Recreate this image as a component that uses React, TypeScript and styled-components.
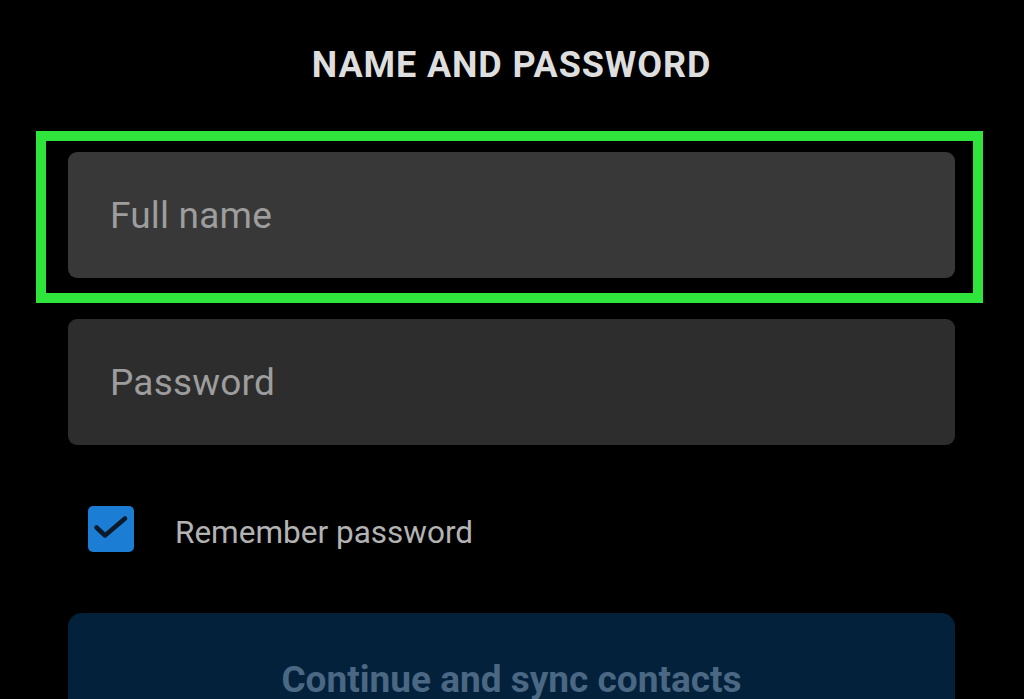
import React from "react";
import styled, { createGlobalStyle } from "styled-components";

const Global = createGlobalStyle`
  html, body {
    margin: 0;
    padding: 0;
    background: #000;
  }
  body {
    font-family: Roboto, "Noto Sans", "Liberation Sans", sans-serif;
    overflow: hidden;
  }
`;

const Page = styled.div`
  width: 1024px;
  height: 699px;
  box-sizing: border-box;
  padding: 45px 69px 0 68px;
  background: #000;
  display: flex;
  flex-direction: column;
  overflow: hidden;
`;

const Title = styled.h1`
  margin: 0;
  font-size: 36px;
  line-height: 40px;
  font-weight: 700;
  color: #dedede;
  text-align: center;
  letter-spacing: 0.9px;
`;

const Fields = styled.div`
  display: flex;
  flex-direction: column;
  gap: 41px;
  margin-top: 67px;
`;

const FieldWrap = styled.div`
  position: relative;
`;

const Highlight = styled.div`
  position: absolute;
  top: -21px;
  left: -32px;
  right: -28px;
  bottom: -25px;
  border: 10px solid #2fe43b;
  pointer-events: none;
`;

const Field = styled.div<{ $shade: string }>`
  height: 126px;
  box-sizing: border-box;
  border-radius: 9px;
  background: ${(p) => p.$shade};
  display: flex;
  align-items: center;
  padding-left: 42px;
  font-size: 37px;
  letter-spacing: 0.2px;
  color: #9d9d9d;
`;

const CheckRow = styled.label`
  display: flex;
  align-items: center;
  gap: 41px;
  margin-top: 61px;
  padding-left: 20px;
  height: 46px;
`;

const Box = styled.span`
  width: 46px;
  height: 46px;
  border-radius: 5px;
  background: #1b7dd4;
  display: flex;
  flex-shrink: 0;
`;

const CheckText = styled.span`
  font-size: 31.5px;
  color: #b3b3b3;
  position: relative;
  top: 3px;
`;

const Button = styled.button`
  margin-top: 61px;
  height: 130px;
  flex-shrink: 0;
  border: none;
  border-radius: 14px;
  background: #03213a;
  color: #4a6883;
  font-family: Roboto, "Noto Sans", "Liberation Sans", sans-serif;
  font-size: 37px;
  font-weight: 700;
  display: flex;
  justify-content: center;
  padding-top: 45px;
  box-sizing: border-box;
`;

export default function App() {
  return (
    <>
      <Global />
      <Page>
        <Title>NAME AND PASSWORD</Title>
        <Fields>
          <FieldWrap>
            <Field $shade="#383838">Full name</Field>
            <Highlight />
          </FieldWrap>
          <Field $shade="#2d2d2d">Password</Field>
        </Fields>
        <CheckRow>
          <Box>
            <svg width="46" height="46" viewBox="0 0 46 46" fill="none">
              <path
                d="M8.5 21.5L17 29.5L37 12.5"
                stroke="#0b1a2b"
                strokeWidth="4.5"
                strokeLinecap="round"
                strokeLinejoin="round"
              />
            </svg>
          </Box>
          <CheckText>Remember password</CheckText>
        </CheckRow>
        <Button>Continue and sync contacts</Button>
      </Page>
    </>
  );
}
